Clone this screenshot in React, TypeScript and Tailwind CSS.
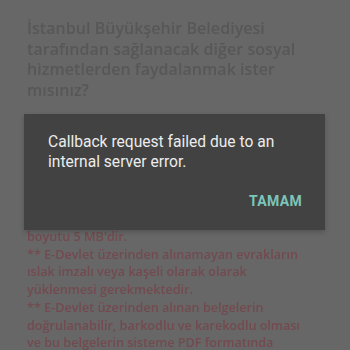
export default function App() {
  const top = [
    "İstanbul Büyükşehir Belediyesi",
    "tarafından sağlanacak diğer sosyal",
    "hizmetlerden faydalanmak ister",
    "mısınız?",
  ];
  const notes = [
    "boyutu 5 MB'dir.",
    "** E-Devlet üzerinden alınamayan evrakların",
    "ıslak imzalı veya kaşeli olarak olarak",
    "yüklenmesi gerekmektedir.",
    "** E-Devlet üzerinden alınan belgelerin",
    "doğrulanabilir, barkodlu ve karekodlu olması",
    "ve bu belgelerin sisteme PDF formatında",
  ];

  return (
    <div className="relative w-[350px] h-[350px] overflow-hidden bg-[#676767] font-['Open_Sans',sans-serif]">
      <div className="px-[27px] pt-[18px] blur-[0.4px]">
        <p className="text-[16px] leading-[20.5px] font-semibold tracking-[0.05px] text-[#575757]">
          {top.map((l, i) => (
            <span key={i} className="block whitespace-nowrap">{l}</span>
          ))}
        </p>
        <p className="mt-[128px] text-[12.6px] leading-[17.7px] font-semibold text-[#734a4f]">
          {notes.map((l, i) => (
            <span key={i} className="block whitespace-nowrap">{l}</span>
          ))}
        </p>
      </div>

      {/* alert dialog */}
      <div className="absolute left-[24px] top-[114px] w-[301px] h-[116px] bg-[#424242] shadow-[0_2px_5px_rgba(0,0,0,0.2)] font-['Roboto',sans-serif]">
        <p className="pl-[24px] pr-[16px] pt-[19px] text-[15.6px] leading-[19.5px] text-[#ececec]">
          Callback request failed due to an internal server error.
        </p>
        <div className="flex justify-end pr-[23px] mt-[20px]">
          <span className="text-[14px] leading-[18px] font-bold tracking-[0.3px] text-[#7cc5b9]">TAMAM</span>
        </div>
      </div>
    </div>
  );
}
